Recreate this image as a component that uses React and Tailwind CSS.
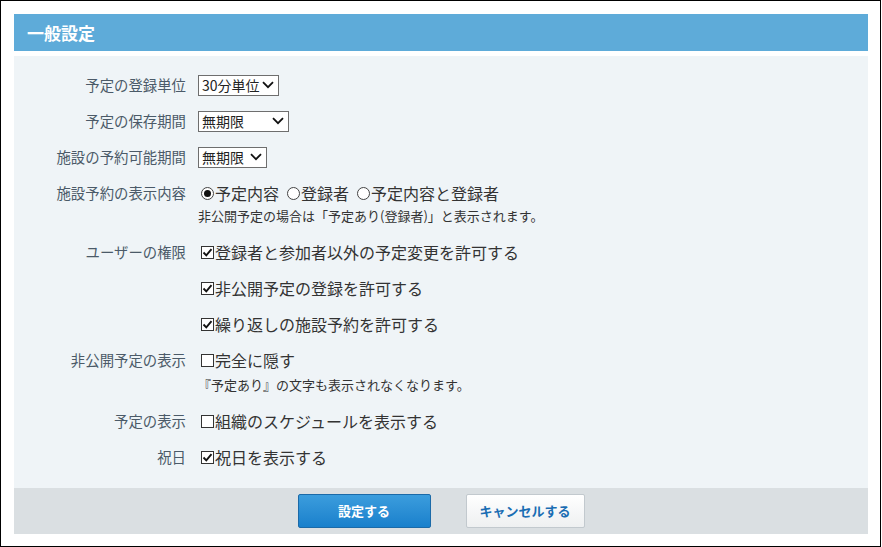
import React from 'react';

const FONT = { fontFamily: '"Noto Sans CJK JP", "Noto Sans", sans-serif' };

function Check({ checked }) {
  return (
    <span className="inline-flex w-[13px] h-[13px] border border-[#333] bg-white items-center justify-center mr-[1px] shrink-0">
      {checked && (
        <svg width="11" height="11" viewBox="0 0 11 11">
          <path d="M1.5 5.5 L4.3 8.3 L9.5 2.2" fill="none" stroke="#111" strokeWidth="1.9" />
        </svg>
      )}
    </span>
  );
}

function Radio({ checked }) {
  return (
    <span className="inline-flex w-[13px] h-[13px] rounded-full border border-[#444] bg-white items-center justify-center mr-[1px] shrink-0">
      {checked && <span className="w-[7px] h-[7px] rounded-full bg-[#111]" />}
    </span>
  );
}

function Select({ value, width }) {
  return (
    <div className={`${width} h-[21px] border border-[#6e6e6e] bg-white flex items-center justify-between pl-[3px] pr-[4px] text-[14px] text-[#222]`}>
      <span>{value}</span>
      <svg width="12" height="8" viewBox="0 0 12 8">
        <path d="M1 1.2 L6 6.2 L11 1.2" fill="none" stroke="#111" strokeWidth="1.8" />
      </svg>
    </div>
  );
}

function Row({ label, children }) {
  return (
    <div className="flex">
      <div className="w-[172px] h-[36px] flex items-center justify-end text-[14.4px] text-[#4b5a68] shrink-0">{label}</div>
      <div className="pl-[12px] flex flex-col">{children}</div>
    </div>
  );
}

function Line({ children }) {
  return <div className="h-[36px] flex items-center text-[16px] text-[#333]">{children}</div>;
}

export default function App() {
  return (
    <div style={FONT} className="w-[881px] h-[547px] border border-black bg-white p-[13px] pr-[12px]">
      <div className="h-[37px] bg-[#5eabd9] flex items-center pl-[13px] text-white font-bold text-[17px]">一般設定</div>
      <div className="mt-[5px] bg-[#eff4f7] pt-[11px] h-[432px]">
        <Row label="予定の登録単位">
          <div className="h-[36px] flex items-center"><Select value="30分単位" width="w-[81px]" /></div>
        </Row>
        <Row label="予定の保存期間">
          <div className="h-[36px] flex items-center"><Select value="無期限" width="w-[91px]" /></div>
        </Row>
        <Row label="施設の予約可能期間">
          <div className="h-[36px] flex items-center"><Select value="無期限" width="w-[69px]" /></div>
        </Row>
        <Row label="施設予約の表示内容">
          <Line>
            <span className="flex items-center ml-[3px]"><Radio checked />予定内容</span>
            <span className="flex items-center ml-[8px]"><Radio />登録者</span>
            <span className="flex items-center ml-[8px]"><Radio />予定内容と登録者</span>
          </Line>
          <div className="h-[18px] -mt-[4px] flex items-center text-[13px] text-[#333]">非公開予定の場合は「予定あり(登録者)」と表示されます。</div>
        </Row>
        <div className="h-[9px]" />
        <Row label="ユーザーの権限">
          <Line><span className="flex items-center ml-[3px]"><Check checked />登録者と参加者以外の予定変更を許可する</span></Line>
          <Line><span className="flex items-center ml-[3px]"><Check checked />非公開予定の登録を許可する</span></Line>
          <Line><span className="flex items-center ml-[3px]"><Check checked />繰り返しの施設予約を許可する</span></Line>
        </Row>
        <Row label="非公開予定の表示">
          <Line><span className="flex items-center ml-[3px]"><Check />完全に隠す</span></Line>
          <div className="h-[18px] -mt-[2px] flex items-center text-[13px] text-[#333]">『予定あり』の文字も表示されなくなります。</div>
        </Row>
        <div className="h-[9px]" />
        <Row label="予定の表示">
          <Line><span className="flex items-center ml-[3px]"><Check />組織のスケジュールを表示する</span></Line>
        </Row>
        <Row label="祝日">
          <Line><span className="flex items-center ml-[3px]"><Check checked />祝日を表示する</span></Line>
        </Row>
      </div>
      <div className="h-[46px] bg-[#dadfe2] flex items-center justify-center gap-[35px]">
        <button className="w-[133px] h-[34px] rounded-[2px] border border-[#1b6aa8] bg-gradient-to-b from-[#3b9ddd] to-[#1880cc] text-white font-bold text-[13px]">設定する</button>
        <button className="w-[119px] h-[34px] rounded-[2px] border border-[#c2c9ce] bg-gradient-to-b from-white to-[#eef0f1] text-[#1a6db3] font-bold text-[13px]">キャンセルする</button>
      </div>
    </div>
  );
}
